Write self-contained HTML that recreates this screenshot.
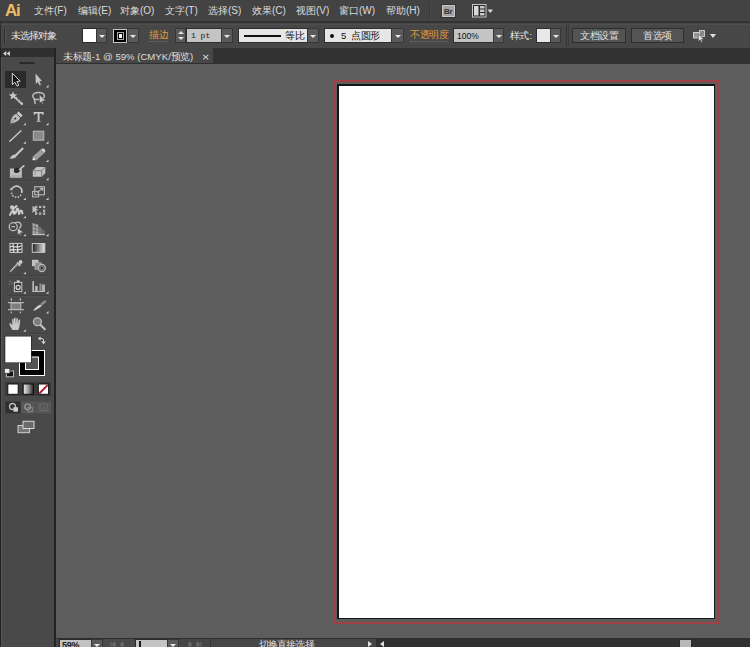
<!DOCTYPE html>
<html><head><meta charset="utf-8">
<style>
*{margin:0;padding:0;box-sizing:border-box}
html,body{width:750px;height:647px;overflow:hidden;background:#5d5d5d;font-family:"Liberation Sans",sans-serif;color:#e0e0e0}
.a{position:absolute}
#menubar{left:0;top:0;width:750px;height:21px;background:#434343}
#menuline{left:0;top:21px;width:750px;height:2px;background:#333333}
#ctrl{left:0;top:23px;width:750px;height:25px;background:#474747}
#tabbar{left:56px;top:48px;width:694px;height:16px;background:#323232}
#tab{left:56px;top:48px;width:157px;height:16px;background:#474747}
#tabline{left:56px;top:63px;width:694px;height:1px;background:#303030}
#canvas{left:56px;top:64px;width:694px;height:574px;background:#5d5d5d}
#panel{left:0;top:48px;width:56px;height:599px;background:#494949}
#panelhead{left:0;top:48px;width:55px;height:9px;background:#2f2f2f}
#panelR{left:54px;top:48px;width:2px;height:599px;background:#242424}
#panelL{left:0;top:48px;width:1px;height:599px;background:#222}
#panelL2{left:1px;top:57px;width:1px;height:590px;background:#555}
#status{left:56px;top:638px;width:694px;height:9px;background:#464646;border-top:1px solid #2e2e2e}
.menu{top:5px;font-size:10px;color:#dcdcdc;white-space:nowrap;line-height:12px}

.ctl{font-size:9.5px;white-space:nowrap;line-height:13px}
.dd{background:#5a5a5a;border:1px solid #363636}
.dd i{position:absolute;left:50%;top:5.5px;margin-left:-3px;width:0;height:0;border-style:solid;border-width:3px 3px 0 3px;border-color:#e8e8e8 transparent transparent transparent}
.dd b.up{position:absolute;left:50%;top:2px;margin-left:-3px;width:0;height:0;border-style:solid;border-width:0 3px 3px 3px;border-color:transparent transparent #e0e0e0 transparent}
.dd b.dn{position:absolute;left:50%;top:8px;margin-left:-3px;width:0;height:0;border-style:solid;border-width:3px 3px 0 3px;border-color:#e0e0e0 transparent transparent transparent}
.inp{background:#c4c4c4;border:1px solid #2e2e2e;color:#111;white-space:nowrap}
.btn{background:#545454;border:1px solid #2e2e2e;font-size:9.5px;color:#e0e0e0;text-align:center;line-height:13px}
.tri{width:0;height:0;border-style:solid;border-color:#e0e0e0 transparent transparent transparent}
.c{display:inline-block;width:var(--w,1em);text-align:center}
</style></head><body>
<div class="a" id="menubar"></div>
<div class="a" id="menuline"></div>
<div class="a" id="ctrl"></div>
<div class="a" id="canvas"></div>
<div class="a" id="tabbar"></div>
<div class="a" id="tab"></div>
<div class="a" id="tabline"></div>
<div class="a" id="panel"></div>
<div class="a" id="panelhead"></div>
<div class="a" id="panelL"></div>
<div class="a" id="panelL2"></div>
<div class="a" id="panelR"></div>
<div class="a" id="status"></div>

<!-- artboard -->
<div class="a" style="left:334px;top:80px;width:386px;height:544px;border:2px solid #a03f44"></div>
<div class="a" style="left:337px;top:84px;width:378px;height:535px;border-style:solid;border-color:#161616;border-width:2px 1px 1px 2px;background:#fff"></div>

<!-- menu -->
<div class="a" style="left:5px;top:1px;font-size:17px;line-height:19px;font-weight:bold;color:#e6bb6a;letter-spacing:-1.2px;text-shadow:0 0 1px rgba(120,70,10,0.6)">Ai</div>
<div class="a menu" style="left:34px"><span class="c">文</span><span class="c">件</span>(F)</div>
<div class="a menu" style="left:78px"><span class="c">编</span><span class="c">辑</span>(E)</div>
<div class="a menu" style="left:120px"><span class="c">对</span><span class="c">象</span>(O)</div>
<div class="a menu" style="left:165px"><span class="c">文</span><span class="c">字</span>(T)</div>
<div class="a menu" style="left:208px"><span class="c">选</span><span class="c">择</span>(S)</div>
<div class="a menu" style="left:252px"><span class="c">效</span><span class="c">果</span>(C)</div>
<div class="a menu" style="left:296px"><span class="c">视</span><span class="c">图</span>(V)</div>
<div class="a menu" style="left:339px"><span class="c">窗</span><span class="c">口</span>(W)</div>
<div class="a menu" style="left:386px"><span class="c">帮</span><span class="c">助</span>(H)</div>



<!-- menu right icons -->
<div class="a" style="left:429px;top:2px;width:1px;height:18px;background:#3a3a3a"></div>
<div class="a" style="left:430px;top:2px;width:1px;height:18px;background:#4c4c4c"></div>
<div class="a" style="left:442px;top:5px;width:13px;height:12px;background:#a4a4a4;border:1px solid #c8c8c8;box-shadow:0 0 0 1px #333"></div>
<div class="a" style="left:444px;top:6.5px;font-size:8px;line-height:10px;font-weight:bold;color:#333;letter-spacing:-0.3px">Br</div>
<svg class="a" style="left:472px;top:4px" width="22" height="14" viewBox="0 0 22 14"><rect x="0.5" y="0.5" width="13.5" height="12.5" fill="#2a2a2a" stroke="#c8c8c8" stroke-width="1"/><rect x="2" y="2" width="4.5" height="9.5" fill="#d8d8d8"/><rect x="8" y="2" width="4.5" height="2.5" fill="#c8c8c8"/><rect x="8" y="5.5" width="4.5" height="2.5" fill="#c8c8c8"/><rect x="8" y="9" width="4.5" height="2.5" fill="#c8c8c8"/><path d="M15.5 5.5 L21 5.5 L18.25 9 Z" fill="#dcdcdc"/></svg>
<!-- control bar -->
<div class="a" style="left:0;top:23px;width:1px;height:25px;background:#2c2c2c"></div>
<div class="a" style="left:1px;top:24px;width:749px;height:1px;background:#4e4e4e"></div>

<div class="a" style="left:4px;top:29px;width:1px;height:14px;background:#2a2a2a"></div>
<div class="a" style="left:5px;top:29px;width:1px;height:14px;background:#555"></div>
<div class="a ctl" style="left:11px;top:29px;color:#e6e6e6;--w:0.96em"><span class="c">未</span><span class="c">选</span><span class="c">择</span><span class="c">对</span><span class="c">象</span></div>
<div class="a" style="left:82px;top:28px;width:15px;height:15px;background:#2a2a2a"></div>
<div class="a" style="left:83px;top:29px;width:13px;height:13px;background:#fff"></div>
<div class="a dd" style="left:96px;top:28px;width:11px;height:15px"><i></i></div>
<div class="a" style="left:113px;top:29px;width:14px;height:14px;background:#000;border:1px solid #c4c4c4"></div>
<div class="a" style="left:117px;top:32px;width:7px;height:8px;border:1px solid #a8a8a8"></div>
<div class="a" style="left:119px;top:34px;width:3px;height:4px;background:#f4f4f4"></div>
<div class="a dd" style="left:127px;top:28px;width:12px;height:15px"><i></i></div>
<div class="a ctl" style="left:149px;top:29px;color:#e39a3c;border-bottom:1px dotted #8a6a45;line-height:12px"><span class="c">描</span><span class="c">边</span></div>
<div class="a dd" style="left:175px;top:28px;width:11px;height:15px"><b class="up"></b><b class="dn"></b></div>
<div class="a inp" style="left:186px;top:28px;width:36px;height:15px;font-family:'Liberation Mono',monospace;font-size:8px;line-height:12px;padding:1px 0 0 4px;color:#1a1a1a">1 pt</div>
<div class="a dd" style="left:221px;top:28px;width:12px;height:15px"><i></i></div>
<div class="a inp" style="left:238px;top:28px;width:70px;height:15px;background:#e6e6e6"></div>
<div class="a" style="left:244px;top:35px;width:37px;height:2px;background:#111"></div>
<div class="a ctl" style="left:285px;top:29px;color:#111"><span class="c">等</span><span class="c">比</span></div>
<div class="a dd" style="left:307px;top:28px;width:12px;height:15px"><i></i></div>
<div class="a inp" style="left:324px;top:28px;width:68px;height:15px;background:#e6e6e6"></div>
<div class="a" style="left:330px;top:34px;width:4px;height:4px;border-radius:50%;background:#111"></div>
<div class="a ctl" style="left:341px;top:29px;color:#111">5</div>
<div class="a ctl" style="left:351px;top:29px;color:#111"><span class="c">点</span><span class="c">圆</span><span class="c">形</span></div>
<div class="a dd" style="left:391px;top:28px;width:13px;height:15px"><i></i></div>
<div class="a ctl" style="left:410px;top:29px;color:#e39a3c;border-bottom:1px dotted #8a6a45;line-height:12px"><span class="c">不</span><span class="c">透</span><span class="c">明</span><span class="c">度</span></div>
<div class="a inp" style="left:453px;top:28px;width:41px;height:15px;font-size:8.5px;padding:2px 0 0 3px">100%</div>
<div class="a dd" style="left:493px;top:28px;width:11px;height:15px"><i></i></div>
<div class="a ctl" style="left:510px;top:29px;color:#e6e6e6;--w:0.95em"><span class="c">样</span><span class="c">式</span><span style="margin-left:1.5px">:</span></div>
<div class="a inp" style="left:536px;top:28px;width:15px;height:15px;background:#e8e8e8"></div>
<div class="a dd" style="left:550px;top:28px;width:11px;height:15px"><i></i></div>
<div class="a" style="left:566px;top:24px;width:1px;height:23px;background:#333"></div>
<div class="a" style="left:568px;top:24px;width:1px;height:23px;background:#3c3c3c"></div>
<div class="a btn" style="left:572px;top:28px;width:54px;height:15px"><span class="c">文</span><span class="c">档</span><span class="c">设</span><span class="c">置</span></div>
<div class="a btn" style="left:631px;top:28px;width:53px;height:15px"><span class="c">首</span><span class="c">选</span><span class="c">项</span></div>
<svg class="a" style="left:692px;top:29px" width="14" height="14" viewBox="0 0 14 14"><rect x="1.5" y="3.5" width="5" height="5.5" fill="#9a9a9a" stroke="#cdcdcd" stroke-width="1"/><rect x="7.5" y="1.5" width="5" height="6" fill="#8a8a8a" stroke="#c4c4c4" stroke-width="1"/><path d="M6.3 4.8 L6.3 12.6 L8.1 10.9 L9.4 13.4 L10.6 12.8 L9.4 10.4 L12 10.4 Z" fill="#e6e6e6" stroke="#3a3a3a" stroke-width="0.6"/></svg>
<div class="a tri" style="left:710px;top:34px;border-width:4px 3px 0 3px"></div>


<!-- tab -->
<div class="a" style="left:63px;top:50px;font-size:9.6px;line-height:13px;color:#dedede;white-space:nowrap"><span class="c">未</span><span class="c">标</span><span class="c">题</span>-1 @ 59% (CMYK/<span class="c">预</span><span class="c">览</span>)</div>
<svg class="a" style="left:202px;top:54px" width="8" height="6"><path d="M1.2 0.8 L6.3 5.3 M6.3 0.8 L1.2 5.3" stroke="#cfcfcf" stroke-width="1.1"/></svg>

<!-- status bar -->
<div class="a" style="left:59px;top:639px;width:33px;height:9px;background:#c2c2c2;border:1px solid #2a2a2a"></div>
<div class="a" style="left:62px;top:640px;font-size:9px;line-height:10px;color:#1a1a1a;font-weight:bold;letter-spacing:-0.3px">59%</div>
<div class="a dd" style="left:91px;top:639px;width:12px;height:9px"><i style="top:4px"></i></div>
<div class="a" style="left:103px;top:639px;width:32px;height:8px;background:#4a4a4a"></div>
<svg class="a" style="left:103px;top:639px" width="32" height="8"><path d="M8 3 L8 8 M12 3 L9 5.5 L12 8 Z M20 3 L17 5.5 L20 8 Z" fill="#6a6a6a" stroke="#6a6a6a" stroke-width="1"/></svg>
<div class="a" style="left:135px;top:639px;width:33px;height:9px;background:#c4c4c4;border:1px solid #2a2a2a"></div>
<div class="a" style="left:139px;top:641px;width:2px;height:6px;background:#1a1a1a"></div>
<div class="a dd" style="left:167px;top:639px;width:12px;height:9px"><i style="top:4px"></i></div>
<svg class="a" style="left:179px;top:639px" width="32" height="8"><path d="M10 3 L13 5.5 L10 8 Z M18 3 L21 5.5 L18 8 Z M22 3 L22 8" fill="#6a6a6a" stroke="#6a6a6a" stroke-width="1"/></svg>
<div class="a" style="left:210px;top:639px;width:1px;height:8px;background:#333"></div>
<div class="a" style="left:259px;top:639px;font-size:9.5px;line-height:12px;color:#e0e0e0;white-space:nowrap;--w:0.96em"><span class="c">切</span><span class="c">换</span><span class="c">直</span><span class="c">接</span><span class="c">选</span><span class="c">择</span></div>
<div class="a" style="left:368px;top:641px;width:0;height:0;border-style:solid;border-width:3px 0 3px 4.5px;border-color:transparent transparent transparent #e0e0e0"></div>
<div class="a" style="left:376px;top:639px;width:374px;height:8px;background:#303030"></div>
<div class="a" style="left:380px;top:641px;width:0;height:0;border-style:solid;border-width:3px 4.5px 3px 0;border-color:transparent #e0e0e0 transparent transparent"></div>
<div class="a" style="left:679px;top:639px;width:13px;height:8px;background:#2a2a2a"></div>
<div class="a" style="left:680px;top:640px;width:11px;height:7px;background:#b8b8b8"></div>
<!-- tools -->
<svg class="a" style="left:0;top:0" width="56" height="440" viewBox="0 0 56 440">
<defs>
<linearGradient id="gr" x1="0" x2="1" y1="0" y2="0"><stop offset="0" stop-color="#1e1e1e"/><stop offset="1" stop-color="#e8e8e8"/></linearGradient>
<linearGradient id="gr2" x1="0" x2="1" y1="0" y2="0"><stop offset="0" stop-color="#f0f0f0"/><stop offset="0.5" stop-color="#9a9a9a"/><stop offset="1" stop-color="#202020"/></linearGradient>
</defs>
<!-- panel header arrows -->
<path d="M3 53.5 L6.3 51 L6.3 56 Z M6.6 53.5 L9.9 51 L9.9 56 Z" fill="#d4d4d4"/>
<!-- grip -->
<rect x="19.5" y="62" width="15" height="2" fill="#2a2a2a"/>
<!-- separators -->
<g fill="#404040">
<rect x="7" y="107" width="41" height="1"/>
<rect x="7" y="180" width="41" height="1"/>
<rect x="7" y="237" width="41" height="1"/>
<rect x="7" y="275" width="41" height="1"/>
<rect x="7" y="295" width="41" height="1"/>
<rect x="7" y="333" width="41" height="1"/>
</g>
<g fill="#4f4f4f">
<rect x="7" y="108" width="41" height="1"/>
<rect x="7" y="181" width="41" height="1"/>
<rect x="7" y="238" width="41" height="1"/>
<rect x="7" y="276" width="41" height="1"/>
<rect x="7" y="296" width="41" height="1"/>
<rect x="7" y="334" width="41" height="1"/>
</g>
<!-- selection highlighted -->
<rect x="5" y="71" width="21" height="17" fill="#2b2b2b"/>
<path d="M12.3 73.2 L12.3 84.6 L14.9 82.2 L17 86.2 L18.8 85.3 L16.9 81.5 L20.2 81.2 Z" fill="#151515" stroke="#d6d6d6" stroke-width="1" stroke-linejoin="round"/>
<!-- direct selection -->
<path d="M35.5 73.5 L35.8 84 L37.8 82 L39.6 85.5 L41 84.8 L39.4 81.3 L42 81 Z" fill="#c4c4c4"/>
<g fill="#d4d4d4">
<path d="M48.5 85 L48.5 87.5 L46 87.5 Z"/>
<path d="M25.8 122.8 L25.8 125.3 L23.3 125.3 Z"/>
<path d="M48.5 122.8 L48.5 125.3 L46 125.3 Z"/>
<path d="M25.8 141.2 L25.8 143.7 L23.3 143.7 Z"/>
<path d="M48.5 141.2 L48.5 143.7 L46 143.7 Z"/>
<path d="M48.5 159.5 L48.5 162 L46 162 Z"/>
<path d="M48.5 177.8 L48.5 180.3 L46 180.3 Z"/>
<path d="M25.8 197.5 L25.8 200 L23.3 200 Z"/>
<path d="M48.5 197.5 L48.5 200 L46 200 Z"/>
<path d="M25.8 215.8 L25.8 218.3 L23.3 218.3 Z"/>
<path d="M25.8 233.8 L25.8 236.3 L23.3 236.3 Z"/>
<path d="M48.5 233.8 L48.5 236.3 L46 236.3 Z"/>
<path d="M25.8 271.8 L25.8 274.3 L23.3 274.3 Z"/>
<path d="M25.8 291.3 L25.8 293.8 L23.3 293.8 Z"/>
<path d="M48.5 291.3 L48.5 293.8 L46 293.8 Z"/>
<path d="M48.5 311 L48.5 313.5 L46 313.5 Z"/>
<path d="M25.8 329.3 L25.8 331.8 L23.3 331.8 Z"/>
</g>
<!-- magic wand -->
<path d="M13 91.5 L14.2 94.3 L17.2 94.2 L15 96.3 L16 99.2 L13.2 97.8 L10.5 99.5 L11.2 96.5 L8.8 94.6 L11.8 94.3 Z" fill="#c8c8c8"/>
<path d="M15.8 97.8 L22 103.9" stroke="#c8c8c8" stroke-width="2.2" stroke-linecap="round"/>
<path d="M17.2 98.2 L19.2 100.2 M19.6 100.6 L21.2 102.2" stroke="#3a3a3a" stroke-width="0.7"/>
<!-- lasso -->
<ellipse cx="38.6" cy="96" rx="5.8" ry="3.6" fill="none" stroke="#c0c0c0" stroke-width="1.5"/>
<path d="M34 98.5 C34.5 101 35.5 102.5 35 104" fill="none" stroke="#c0c0c0" stroke-width="1.4"/>
<path d="M39.3 94.6 L39.5 103.6 L41.2 101.8 L42.3 104.2 L43.3 103.7 L42.3 101.3 L45.4 100.8 Z" fill="#cacaca" stroke="#3a3a3a" stroke-width="0.5"/>
<!-- pen -->
<path d="M18.6 111.5 L22.6 115.5 L20.8 117.2 L16.8 113.2 Z" fill="#cfcfcf"/>
<path d="M16.3 113.8 L20.2 117.7 C19 121 15.5 122.5 10.2 123.5 C11 118.5 13 115 16.3 113.8 Z" fill="#bdbdbd"/>
<circle cx="15.3" cy="118.6" r="1" fill="#333"/>
<path d="M10.5 123.2 L14.8 119" stroke="#555" stroke-width="0.6"/>
<!-- type T -->
<path d="M33.7 112 L43.6 112 L43.6 114.8 L42.6 114.8 C42.3 113.8 41.8 113.5 40.6 113.5 L39.5 113.5 L39.5 120.4 C39.5 121 39.9 121.2 40.8 121.2 L40.8 121.8 L36.4 121.8 L36.4 121.2 C37.3 121.2 37.7 121 37.7 120.4 L37.7 113.5 L36.7 113.5 C35.5 113.5 35 113.8 34.7 114.8 L33.7 114.8 Z" fill="#cdcdcd"/>
<!-- line -->
<path d="M9.8 141.2 L21 130.8" stroke="#c8c8c8" stroke-width="1.4" stroke-linecap="round"/>
<!-- rect -->
<rect x="33.3" y="131.2" width="10.5" height="9" fill="#8a8a8a" stroke="#b8b8b8" stroke-width="1"/>
<!-- brush -->
<path d="M22.6 148.5 L15.4 155.8" stroke="#c8c8c8" stroke-width="2" stroke-linecap="round"/>
<path d="M15.8 155 C14.5 153.6 12 154.8 9.6 158.6 C12.6 158.8 15.6 158.4 16.4 156.6 Z" fill="#c4c4c4"/>
<!-- pencil -->
<path d="M41 149.2 L44.5 152.7 L36.2 160.5 L32.8 160 L32.5 156.8 Z" fill="#9e9e9e"/>
<path d="M41 149.2 C42 148.2 43.5 148.2 44.5 149.2 C45.5 150.2 45.5 151.7 44.5 152.7 Z" fill="#dadada"/>
<path d="M34 158 L32.8 160 L35 159" fill="#ececec" stroke="#ececec" stroke-width="1"/>
<!-- blob brush -->
<path d="M9.9 168.5 L14.5 168.5 C13.5 170.5 13.8 172.5 15.5 173 C18 173.5 20 171.5 20.5 169 L21.9 168.5 L21.9 177.7 L9.9 177.7 Z" fill="#bcbcbc"/>
<path d="M14.5 168.5 C16 167.5 18.5 167.5 20.5 169 C20 171.5 18 173.5 15.5 173 C13.8 172.5 13.5 170.5 14.5 168.5 Z" fill="#2a2a2a"/>
<path d="M19.5 169.5 L23.8 165.8" stroke="#c8c8c8" stroke-width="1.6" stroke-linecap="round"/>
<path d="M10.5 176 L21 176" stroke="#9a9a9a" stroke-width="0.8"/>
<!-- eraser -->
<path d="M36.5 167 L45.4 167 L45.4 173 L41.7 176.8 L32.8 176.8 L32.8 170.7 Z" fill="#c2c2c2"/>
<path d="M32.8 170.7 L41.7 170.7 L45.4 167 M41.7 170.7 L41.7 176.8" fill="none" stroke="#6a6a6a" stroke-width="0.8"/>
<path d="M34 172.5 L36 172.5 M34 174.5 L36 174.5" stroke="#888" stroke-width="0.7"/>
<!-- rotate -->
<path d="M11.6 189.2 C13 186.2 17.5 185 20.3 187.5 C22 189 22.2 191.3 21.6 193" fill="none" stroke="#c8c8c8" stroke-width="1.6"/>
<path d="M11 187.5 L12.5 190.5 L9.8 190 Z" fill="#c8c8c8"/>
<g fill="#bdbdbd"><circle cx="11.6" cy="193.4" r="0.9"/><circle cx="13" cy="196" r="0.9"/><circle cx="15.6" cy="197.2" r="0.9"/><circle cx="18.4" cy="197" r="0.9"/><circle cx="20.7" cy="195.3" r="0.9"/></g>
<!-- scale -->
<rect x="32.6" y="191.3" width="6" height="5.6" fill="none" stroke="#bdbdbd" stroke-width="1"/>
<rect x="34.8" y="186.8" width="9.6" height="8" fill="none" stroke="#c8c8c8" stroke-width="1"/>
<path d="M37 192.6 L42.6 188.4 M39.8 188.2 L42.8 188.2 L42.8 191" fill="none" stroke="#d0d0d0" stroke-width="1"/>
<!-- warp -->
<path d="M10 215 C11 212 13 211 13.5 209 C14 207.2 12.5 206 11.5 206.5 C10.5 207 11 208.6 12.6 208.6 C14.2 208.6 15.5 206.5 16.5 206 M13.6 213.5 C15.5 214.2 16.5 212 16.6 210 C16.8 208.5 17.5 208.2 18.2 209.2 C18.8 210.5 18.5 213 19 214 C19.5 214 19.8 211.5 20.5 210.8 C21.5 210 22.5 211.5 22.4 213.5" fill="none" stroke="#c8c8c8" stroke-width="2" stroke-linecap="round"/>
<circle cx="14" cy="212" r="1.5" fill="#d8d8d8"/>
<!-- free transform -->
<g fill="#cccccc"><rect x="35" y="205.8" width="2.2" height="2.2"/><rect x="39" y="205.8" width="2.2" height="2.2"/><rect x="43" y="205.8" width="2.2" height="2.2"/><rect x="43" y="209.7" width="2.2" height="2.2"/><rect x="35" y="212.5" width="2.2" height="2.2"/><rect x="39" y="212.5" width="2.2" height="2.2"/><rect x="43" y="212.5" width="2.2" height="2.2"/></g>
<rect x="36" y="206.8" width="8.2" height="6.8" fill="none" stroke="#7c7c7c" stroke-width="0.6"/>
<path d="M32.5 205.8 L32.5 213 L34.3 211.2 L36 213 L37 212.2 L35.6 210.5 L38.6 210.2 Z" fill="#c0c0c0"/>
<!-- shape builder -->
<circle cx="13.2" cy="226.7" r="4" fill="none" stroke="#bcbcbc" stroke-width="1.3"/>
<path d="M15 223 C17 221.5 20.5 222 21 224.5 C21.3 226 20.5 227.5 19 228.5" fill="none" stroke="#bcbcbc" stroke-width="1.3"/>
<path d="M11.3 226.7 L15 226.7" stroke="#c8c8c8" stroke-width="1"/>
<path d="M17.3 227.8 L17.6 235 L19.1 233.5 L20.2 235.5 L21.2 235 L20.2 233 L23.7 232.5 Z" fill="#cacaca" stroke="#3a3a3a" stroke-width="0.5"/>
<!-- perspective grid -->
<path d="M32.5 223 L38.2 224.8 L38.2 234.6 L32.5 234.6 Z" fill="#a8a8a8"/>
<path d="M38.2 226.5 L41.5 227.8 L41.5 234.6 L38.2 234.6 Z" fill="#8e8e8e"/>
<path d="M41.5 230 L44.8 231 L44.8 234.6 L41.5 234.6 Z" fill="#7a7a7a"/>
<path d="M32.5 226.5 L44.8 230 M32.5 230 L44.8 232.5 M35.3 224 L35.3 234.6 M40 225.5 L40 234.6 M43 229 L43 234.6" stroke="#5a5a5a" stroke-width="0.6" fill="none"/>
<path d="M32.5 234.6 L44.8 234.6" stroke="#d0d0d0" stroke-width="1"/>
<!-- mesh -->
<rect x="10" y="243.4" width="12" height="9" fill="#3a3a3a" stroke="#cfcfcf" stroke-width="1"/>
<path d="M10 247 C12.5 244.5 15.5 249.5 22 245.5 M10 250.5 C13.5 247.5 16.5 252 22 248.8 M12.8 243.4 C14.5 246 12 249.5 14 252.4 M17.8 243.4 C16 246.5 19.5 249 17.2 252.4" fill="none" stroke="#d4d4d4" stroke-width="1.3"/>
<!-- gradient -->
<rect x="32.3" y="243.5" width="12.5" height="8.8" fill="url(#gr)" stroke="#c8c8c8" stroke-width="1"/>
<!-- eyedropper -->
<circle cx="20.6" cy="262" r="1.9" fill="#cccccc"/>
<path d="M17 262.5 L20.3 265.8" stroke="#c4c4c4" stroke-width="2.2"/>
<path d="M18.2 264.2 L11.5 270.8 L10.3 271.8 L10.8 270.4 L17.2 263.6" fill="#555" stroke="#c4c4c4" stroke-width="1"/>
<!-- blend -->
<rect x="32" y="259.8" width="6.5" height="6.3" fill="#c2c2c2"/>
<rect x="35" y="262.8" width="6" height="6.4" fill="#8c8c8c" stroke="#b4b4b4" stroke-width="0.8"/>
<circle cx="41.8" cy="268" r="3.6" fill="#6e6e6e" stroke="#bcbcbc" stroke-width="1.1"/>
<circle cx="41.8" cy="268" r="0.9" fill="#2a2a2a"/>
<!-- symbol sprayer -->
<rect x="14.4" y="282.4" width="7.4" height="9.2" fill="#3c3c3c" stroke="#c2c2c2" stroke-width="1.1"/>
<rect x="16.8" y="280.3" width="2.8" height="1.8" fill="#d0d0d0"/>
<circle cx="18.1" cy="287.4" r="2" fill="none" stroke="#d0d0d0" stroke-width="1.3"/>
<g fill="#8a8a8a"><circle cx="10" cy="281.5" r="0.7"/><circle cx="12" cy="283" r="0.7"/><circle cx="9.5" cy="284.2" r="0.6"/></g>
<!-- graph -->
<g fill="#bdbdbd"><rect x="32.4" y="281.2" width="1.6" height="10.5"/><rect x="35.2" y="286" width="2.4" height="5.7"/><rect x="39.4" y="283.5" width="2.2" height="8.2" fill="#8c8c8c"/><rect x="42.2" y="284.5" width="2.6" height="7.2"/><rect x="32.4" y="290.9" width="12.5" height="1.1"/></g>
<!-- artboard -->
<rect x="11" y="303" width="9.8" height="6.4" fill="#7e7e7e" stroke="#bcbcbc" stroke-width="1"/>
<path d="M8 302.6 L23.8 302.6 M8 309.7 L23.8 309.7 M11.4 298.2 L11.4 300.8 M20.4 298.2 L20.4 300.8 M11.4 311.4 L11.4 313.2 M20.4 311.4 L20.4 313.2" stroke="#b8b8b8" stroke-width="1.3"/>
<!-- slice -->
<path d="M33 310.8 C35 308 37.5 305.5 40.6 304.4 L41.6 306 C39 308.5 36 310.2 33 310.8 Z" fill="#d2d2d2"/>
<path d="M40.4 303.8 L44.6 300.3 L46.6 301.4 L42 305.8 Z" fill="#8e8e8e"/>
<!-- hand -->
<path d="M12.5 330 C11 327.5 9.8 325.5 9.3 324 C9.2 323.2 10 322.8 10.8 323.6 L12.2 325.3 L12.2 319.6 C12.2 318.6 13.6 318.6 13.6 319.6 L13.8 324 L14.1 318.2 C14.1 317.2 15.6 317.2 15.6 318.2 L15.7 324 L16.4 318.6 C16.5 317.6 18 317.7 17.9 318.7 L17.6 324.2 L18.7 320 C19 319 20.4 319.3 20.2 320.3 L19.6 325.5 C19.3 328 18.6 329.3 18 330 Z" fill="#c8c8c8"/>
<!-- zoom -->
<path d="M40.3 324.8 L44.8 329.3" stroke="#c4c4c4" stroke-width="2" stroke-linecap="round"/>
<circle cx="37.4" cy="321.7" r="3.9" fill="#7c7c7c" stroke="#c0c0c0" stroke-width="1.3"/>
<!-- fill / stroke -->
<rect x="19" y="350" width="26" height="26" fill="#fff"/>
<rect x="20" y="351" width="24" height="24" fill="#000"/>
<rect x="25" y="356.5" width="14" height="13.5" fill="#fff"/>
<rect x="26" y="357.5" width="12" height="11.5" fill="#555"/>
<rect x="4.5" y="335.8" width="27.2" height="27.2" fill="#262626"/>
<rect x="5.3" y="336.5" width="25.7" height="25.9" fill="#ffffff"/>
<!-- swap arrows -->
<path d="M40 338.5 L42 338.5 C43 338.5 43.5 339.2 43.5 340.5 L43.5 342" fill="none" stroke="#c8c8c8" stroke-width="1.2"/>
<path d="M38 338.5 L40.6 336.4 L40.6 340.6 Z" fill="#dcdcdc"/>
<path d="M41.3 341.6 L45.7 341.6 L43.5 344.2 Z" fill="#e0e0e0"/>
<!-- default fill/stroke -->
<rect x="6.5" y="371" width="7" height="5.8" fill="#111" stroke="#bdbdbd" stroke-width="1"/>
<rect x="4.3" y="368.3" width="5.6" height="5" fill="#f0f0f0" stroke="#333" stroke-width="0.8"/>
<!-- color mode buttons -->
<rect x="5" y="382" width="46" height="14" fill="#3a3a3a"/>
<rect x="7.8" y="384" width="10.4" height="10.3" fill="#fff" stroke="#111" stroke-width="1"/>
<rect x="23.2" y="384" width="10.3" height="10.3" fill="url(#gr2)" stroke="#111" stroke-width="1"/>
<rect x="38.3" y="384" width="10.3" height="10.3" fill="#fff" stroke="#111" stroke-width="1"/>
<path d="M39.3 393.5 L47.8 384.8" stroke="#b01c2c" stroke-width="1.9"/>
<!-- draw modes -->
<rect x="5.5" y="401.5" width="15" height="11.8" fill="#2e2e2e"/>
<rect x="21" y="401.5" width="14.4" height="11.8" fill="#575757"/>
<rect x="36.2" y="401.5" width="14.8" height="11.8" fill="#575757"/>
<circle cx="12.5" cy="406.5" r="3" fill="none" stroke="#b8b8b8" stroke-width="1.3"/>
<rect x="13.5" y="407.2" width="4.5" height="4.5" fill="#cfcfcf"/>
<circle cx="27.6" cy="406.8" r="2.8" fill="none" stroke="#9c9c9c" stroke-width="1.2"/>
<rect x="28" y="407.5" width="4.3" height="4.3" fill="none" stroke="#8c8c8c" stroke-width="0.9"/>
<rect x="40" y="404" width="7.2" height="6.5" fill="none" stroke="#6e6e6e" stroke-width="0.8"/>
<circle cx="44" cy="408" r="0.8" fill="#777"/>
<!-- screen mode -->
<rect x="18" y="425.5" width="11.5" height="7.2" fill="#777" stroke="#cfcfcf" stroke-width="1"/>
<rect x="23" y="421.3" width="11" height="7.2" fill="#6a6a6a" stroke="#d8d8d8" stroke-width="1"/>
</svg>
</body></html>
